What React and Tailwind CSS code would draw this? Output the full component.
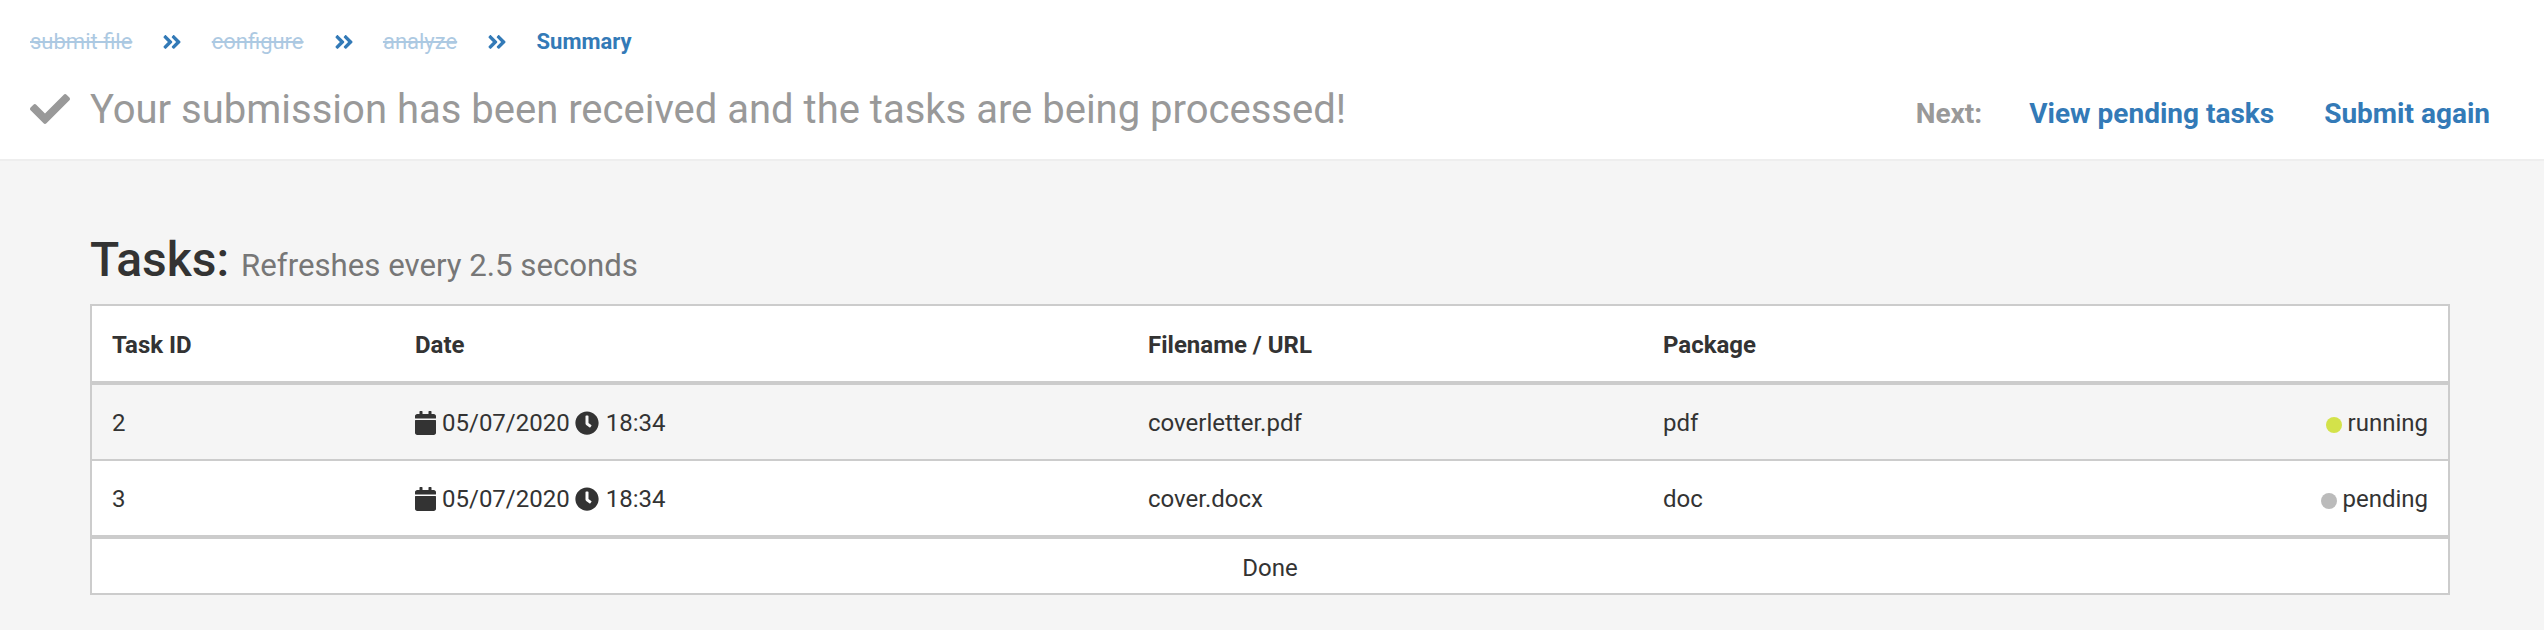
import { FaAngleDoubleRight, FaCalendar, FaCheck, FaClock } from "react-icons/fa";

const steps = ["submit file", "configure", "analyze"];

const tasks = [
  { id: 2, date: "05/07/2020", time: "18:34", file: "coverletter.pdf", pkg: "pdf", status: "running" },
  { id: 3, date: "05/07/2020", time: "18:34", file: "cover.docx", pkg: "doc", status: "pending" },
];

const columns = "grid grid-cols-[303px_733px_515px_1fr_auto] items-center px-5";

function Breadcrumb() {
  return (
    <nav className="flex h-[30px] items-center text-[22px] leading-[30px] text-[#337ab7]">
      {steps.map((step) => (
        <span key={step} className="flex items-center">
          <span className="line-through opacity-40">{step}</span>
          <FaAngleDoubleRight className="mr-[28.4px] ml-[29px] size-[22px]" />
        </span>
      ))}
      <span className="font-bold">Summary</span>
    </nav>
  );
}

function Header() {
  return (
    <header className="h-[161px] border-b-2 border-[#eeeeee] bg-white pt-[27px] pr-[54px] pl-[30px]">
      <Breadcrumb />
      <div className="mt-[26px] flex items-baseline justify-between text-[#999999]">
        <h1 className="flex items-baseline text-[40px] leading-[54px]">
          <FaCheck className="mr-5 mb-[2px] size-[40px] self-center" />
          <span>Your submission has been received and the tasks are being processed!</span>
        </h1>
        <p className="flex text-[28px] leading-[36px] font-bold">
          <span className="mr-[47px]">Next:</span>
          <a className="mr-[50px] text-[#337ab7]">View pending tasks</a>
          <a className="text-[#337ab7]">Submit again</a>
        </p>
      </div>
    </header>
  );
}

function TaskRow({ task, striped }) {
  return (
    <div className={`${columns} pt-[2px] ${striped ? "h-[74px] bg-[#f5f5f5]" : "h-[76px] border-t-2 border-[#cccccc] bg-white"}`}>
      <span>{task.id}</span>
      <span className="flex items-center">
        <FaCalendar className="mr-[6px] h-6 w-[21px]" />
        {task.date}
        <FaClock className="mr-[7px] ml-[5px] size-6" />
        {task.time}
      </span>
      <span>{task.file}</span>
      <span>{task.pkg}</span>
      <span className="flex items-center">
        <span className={`mt-1 mr-[5.5px] size-4 rounded-full ${task.status === "running" ? "bg-[#d3e24a]" : "bg-[#bbbbbb]"}`} />
        {task.status}
      </span>
    </div>
  );
}

export default function App() {
  return (
    <div className="h-[630px] bg-[#f5f5f5] font-['Roboto',sans-serif] text-[#333333]">
      <Header />
      <main className="pt-[68px] pr-[94px] pl-[90px]">
        <h2 className="mb-[13px] flex h-[62px] items-baseline gap-[12px] text-[48px] leading-[62px] font-medium">
          Tasks:
          <small className="text-[31.2px] font-normal text-[#777777]">Refreshes every 2.5 seconds</small>
        </h2>
        <section className="border-2 border-[#cccccc] bg-white text-[24px] leading-[34px]">
          <div className={`${columns} h-[79px] border-b-4 border-[#cccccc] pt-[2px] font-bold`}>
            <span>Task ID</span>
            <span>Date</span>
            <span>Filename / URL</span>
            <span>Package</span>
            <span />
          </div>
          {tasks.map((task, index) => (
            <TaskRow key={task.id} task={task} striped={index % 2 === 0} />
          ))}
          <div className="flex h-[58px] items-center justify-center border-t-4 border-[#cccccc] pt-[4px]">Done</div>
        </section>
      </main>
    </div>
  );
}
